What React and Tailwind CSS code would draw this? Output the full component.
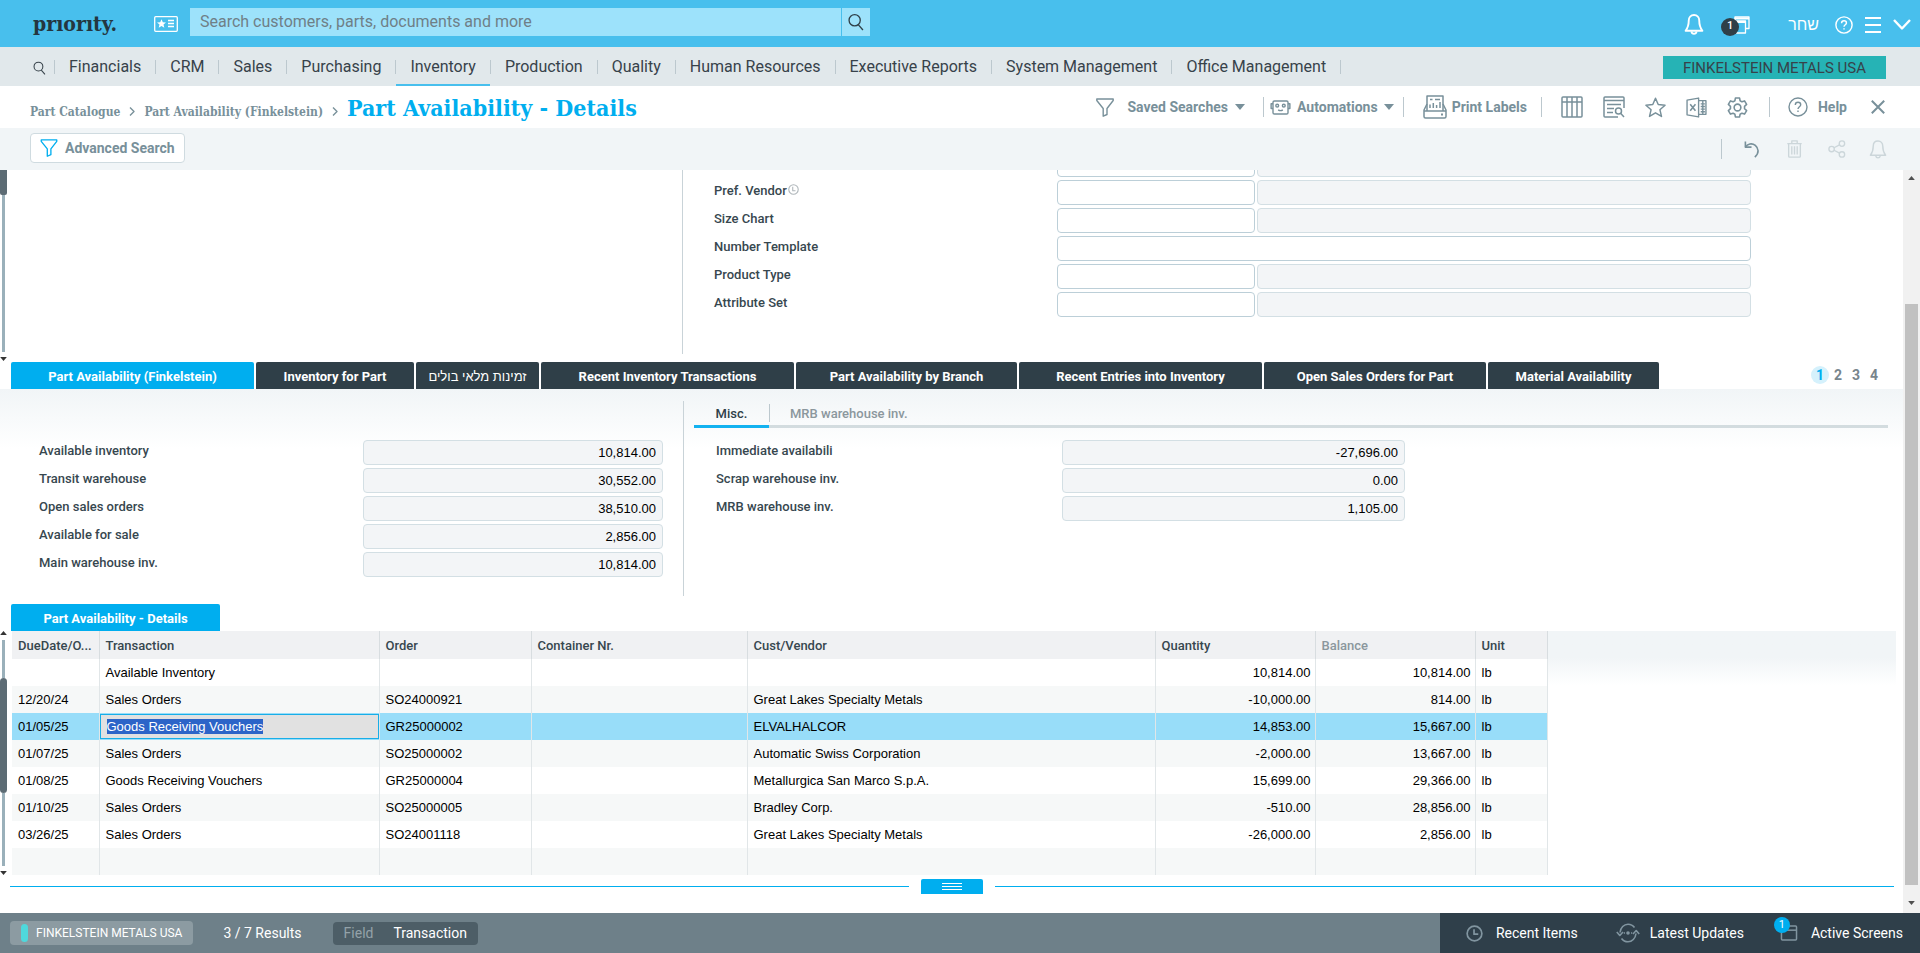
import React, { useEffect, useRef } from 'react';
import clsx from 'clsx';

const menuItems = [
  'Financials',
  'CRM',
  'Sales',
  'Purchasing',
  'Inventory',
  'Production',
  'Quality',
  'Human Resources',
  'Executive Reports',
  'System Management',
  'Office Management',
];

const subTabs = [
  { label: 'Part Availability (Finkelstein)', width: 'w-[243px]', active: true },
  { label: 'Inventory for Part', width: 'w-[158px]' },
  { label: 'זמינות מלאי בולים', width: 'w-[123px]', hebrew: true },
  { label: 'Recent Inventory Transactions', width: 'w-[253px]' },
  { label: 'Part Availability by Branch', width: 'w-[221px]' },
  { label: 'Recent Entries into Inventory', width: 'w-[243px]' },
  { label: 'Open Sales Orders for Part', width: 'w-[222px]' },
  { label: 'Material Availability', width: 'w-[171px]' },
];

const stockFields = [
  { id: 'available-inventory', label: 'Available inventory', value: '10,814.00' },
  { id: 'transit-warehouse', label: 'Transit warehouse', value: '30,552.00' },
  { id: 'open-sales-orders', label: 'Open sales orders', value: '38,510.00' },
  { id: 'available-for-sale', label: 'Available for sale', value: '2,856.00' },
  { id: 'main-warehouse', label: 'Main warehouse inv.', value: '10,814.00' },
];

const miscFields = [
  { id: 'immediate', label: 'Immediate availabili', value: '-27,696.00' },
  { id: 'scrap', label: 'Scrap warehouse inv.', value: '0.00' },
  { id: 'mrb', label: 'MRB warehouse inv.', value: '1,105.00' },
];

const columns = [
  { label: 'DueDate/O...', width: 'w-[87px]' },
  { label: 'Transaction', width: 'w-[280px]' },
  { label: 'Order', width: 'w-[152px]' },
  { label: 'Container Nr.', width: 'w-[216px]' },
  { label: 'Cust/Vendor', width: 'w-[408px]' },
  { label: 'Quantity', width: 'w-[160px]' },
  { label: 'Balance', width: 'w-[160px]', muted: true },
  { label: 'Unit', width: 'w-[72px]' },
];

const rows = [
  ['', 'Available Inventory', '', '', '', '10,814.00', '10,814.00', 'lb'],
  ['12/20/24', 'Sales Orders', 'SO24000921', '', 'Great Lakes Specialty Metals', '-10,000.00', '814.00', 'lb'],
  ['01/05/25', 'Goods Receiving Vouchers', 'GR25000002', '', 'ELVALHALCOR', '14,853.00', '15,667.00', 'lb'],
  ['01/07/25', 'Sales Orders', 'SO25000002', '', 'Automatic Swiss Corporation', '-2,000.00', '13,667.00', 'lb'],
  ['01/08/25', 'Goods Receiving Vouchers', 'GR25000004', '', 'Metallurgica San Marco S.p.A.', '15,699.00', '29,366.00', 'lb'],
  ['01/10/25', 'Sales Orders', 'SO25000005', '', 'Bradley Corp.', '-510.00', '28,856.00', 'lb'],
  ['03/26/25', 'Sales Orders', 'SO24001118', '', 'Great Lakes Specialty Metals', '-26,000.00', '2,856.00', 'lb'],
  ['', '', '', '', '', '', '', ''],
];

const SELECTED_ROW = 2;

/* Icons */
const Svg = ({ className, box = '0 0 24 24', stroke = 1.5, children }) => (
  <svg
    viewBox={box}
    className={clsx('shrink-0', className)}
    fill="none"
    stroke="currentColor"
    strokeWidth={stroke}
    strokeLinejoin="round"
    aria-hidden="true"
  >
    {children}
  </svg>
);

const SearchIcon = ({ className }) => (
  <Svg className={className} box="0 0 18 20">
    <circle cx="7.5" cy="8" r="6.3" />
    <path d="M11.5 13l5.3 6" />
  </Svg>
);

const FunnelIcon = ({ className }) => (
  <Svg className={className} box="0 0 18 19" stroke={1.4}>
    <path d="M.8 1h16.4v1.5L11 10.5v6l-3.8 1.7v-7.7L.8 2.5z" />
  </Svg>
);

const CardIcon = ({ className }) => (
  <Svg className={className} box="0 0 24 16" stroke={1.3}>
    <rect x=".7" y=".7" width="22.6" height="14.6" rx="1" />
    <path d="M7.5 3.2l1.3 3 3.2.2-2.5 2.1.8 3.2-2.8-1.7-2.8 1.7.8-3.2L3 6.4l3.2-.2z" fill="currentColor" stroke="none" />
    <path d="M14 4.5h6M14 7.5h6M14 10.5h6" />
  </Svg>
);

const BellIcon = ({ className, stroke = 1.5 }) => (
  <Svg className={className} box="0 0 18 20" stroke={stroke}>
    <path d="M9 1c-3 0-5 2.2-5 5.3 0 4.7-1 7.2-3 9.7h16c-2-2.5-3-5-3-9.7C14 3.2 12 1 9 1z" />
    <path d="M6.5 16.5c.3 1.5 1.2 2.3 2.5 2.3s2.2-.8 2.5-2.3" />
  </Svg>
);

const WindowsIcon = ({ className }) => (
  <Svg className={className} box="0 0 20 18" stroke={1.3}>
    <path d="M5 4V1h14v11.5h-3" />
    <path d="M4.5 1.5H19v2H4.5z" fill="currentColor" stroke="none" />
    <path d="M1 5h14.500v12H1z" />
    <path d="M1 5h14.500v2H1z" fill="currentColor" stroke="none" />
  </Svg>
);

const QuestionIcon = ({ className, stroke = 1.4 }) => (
  <Svg className={className} box="0 0 20 20" stroke={stroke}>
    <circle cx="10" cy="10" r="9" />
    <path d="M7.3 8c0-1.700 1.100-2.700 2.700-2.700s2.700 1 2.700 2.400c0 2-2.700 2.100-2.700 4.300M10 13.600v1.500" />
  </Svg>
);

const RobotIcon = ({ className }) => (
  <Svg className={className} box="0 0 22 16">
    <rect x="3" y="1" width="16" height="14" rx="1.5" />
    <path d="M3 4H1v5h2M19 4h2v5h-2" />
    <circle cx="7.5" cy="6" r="1.5" />
    <circle cx="14.5" cy="6" r="1.5" />
    <path d="M8.5 10.5c1.5 1 3.5 1 5 0" />
  </Svg>
);

const PrinterIcon = ({ className }) => (
  <Svg className={className} box="0 0 24 24">
    <path d="M4 16V1h16v15" />
    <path d="M4 9l-3 6v6.500c0 1 .6 1.500 1.500 1.500h19c.9 0 1.500-.5 1.500-1.500V15l-3-6" />
    <path d="M1 16h22M7 13V9.500M10.300 13V8M13.600 13v-3M17 13V7M7 4.500h2.500M12 4.500h5" />
    <path d="M18 19.500h2" strokeWidth="2" />
  </Svg>
);

const ColumnsIcon = ({ className }) => (
  <Svg className={className} box="0 0 22 22">
    <rect x="1" y="1" width="20" height="20" rx="1" />
    <path d="M1 6h20M6 1v20M11 1v20M16 1v20" />
  </Svg>
);

const ListSearchIcon = ({ className }) => (
  <Svg className={className} box="0 0 22 22">
    <path d="M21 12V2c0-.6-.4-1-1-1H2c-.6 0-1 .4-1 1v18c0 .6.4 1 1 1h13" />
    <path d="M1 4.500h20M4 8.500h14M4 12.500h7M4 16.500h6" />
    <circle cx="15.5" cy="15" r="3" />
    <path d="M17.600 17.300L21 21" />
  </Svg>
);

const StarIcon = ({ className }) => (
  <Svg className={className} box="0 0 20 20" stroke={1.4}>
    <path d="M10 1.200l2.600 6 6.500.6-4.900 4.300 1.500 6.400-5.700-3.400-5.700 3.400 1.500-6.400L.9 7.800l6.500-.6z" />
  </Svg>
);

const ExcelIcon = ({ className }) => (
  <Svg className={className} box="0 0 20 20" stroke={1.3}>
    <path d="M12 1L1 3v14l11 2z" />
    <path d="M12 3.500h7v13h-7M14 6.500h4M14 9h4M14 11.500h4M14 14h4M16 4v12" />
    <path d="M4 7l5 6M9 7l-5 6" strokeWidth="1.5" />
  </Svg>
);

const GearIcon = ({ className }) => (
  <Svg className={className} box="0 0 20 20">
    <path d="M8 1h4l.5 2.600 1.700 1 2.500-.9 2 3.400-2 1.800v2.200l2 1.800-2 3.400-2.500-.9-1.700 1L12 19H8l-.5-2.600-1.700-1-2.500.9-2-3.400 2-1.800V8.900l-2-1.800 2-3.400 2.500.9 1.700-1z" />
    <circle cx="10" cy="10" r="3.2" />
  </Svg>
);

const CloseIcon = ({ className }) => (
  <Svg className={className} box="0 0 14 14" stroke={2}>
    <path d="M.8.8l12.400 12.400M13.200.8L.8 13.200" />
  </Svg>
);

const UndoIcon = ({ className }) => (
  <Svg className={className} box="0 0 16 18" stroke={1.7}>
    <path d="M1 .5v6h6.500" />
    <path d="M1 6.500c2-3.500 7-4.800 10.500-1.800s4.500 8-.5 12.300" />
  </Svg>
);

const TrashIcon = ({ className }) => (
  <Svg className={className} box="0 0 18 20">
    <path d="M1 4h16M6 4V1h6v3M2.500 4v14c0 .6.400 1 1 1h11c.6 0 1-.4 1-1V4M6 7v9M9 7v9M12 7v9" />
  </Svg>
);

const ShareIcon = ({ className }) => (
  <Svg className={className} box="0 0 20 20">
    <circle cx="4" cy="10" r="3" />
    <circle cx="15.5" cy="4" r="3" />
    <circle cx="15.5" cy="16" r="3" />
    <path d="M6.700 8.600l6.100-3.200M6.700 11.400l6.100 3.200" />
  </Svg>
);

const ClockIcon = ({ className }) => (
  <Svg className={className} box="0 0 18 18" stroke={1.8}>
    <circle cx="9" cy="9" r="7.8" />
    <path d="M8.500 4.500v5.200h4.500" />
  </Svg>
);

const UpdatesIcon = ({ className }) => (
  <Svg className={className} box="0 0 24 20" stroke={1.6}>
    <path d="M4 9.500C4.500 4.500 8 1.200 12 1.200c2.800 0 5 1.200 6.500 3.300M20 10.500c-.5 5-4 8.300-8 8.300-2.800 0-5-1.200-6.500-3.300" />
    <path d="M.8 9l3 3.500L7 9M17 11l3.200-3.500 3 3.500" />
    <circle cx="12" cy="10" r="1.8" fill="currentColor" stroke="none" />
    <path d="M7.800 10H9M15 10h1.200" />
  </Svg>
);

const ScreenIcon = ({ className }) => (
  <Svg className={className} box="0 0 18 17" stroke={1.6}>
    <rect x="1" y="1" width="16" height="15" rx="1" />
    <path d="M1 5.500h16" />
  </Svg>
);

const Caret = ({ className, up }) => (
  <svg viewBox="0 0 10 6" className={clsx('shrink-0', className)} fill="currentColor" aria-hidden="true">
    <path d={up ? 'M0 6h10L5 0z' : 'M0 0h10L5 6z'} />
  </svg>
);

const Crumb = () => (
  <Svg className="mx-[9px] h-[9px] w-[6px]" box="0 0 6 9" stroke={1.4}>
    <path d="M1 .5l4 4-4 4" />
  </Svg>
);

const Divider = ({ className }) => <span className={clsx('w-px bg-[#bcc8ce]', className)} />;

/* Form pieces */
const boxStyle = 'h-[25px] min-w-0 rounded-sm border px-[6px] font-[Liberation_Sans,Arial,sans-serif] text-[13px] text-black outline-none';

const VendorRow = ({ id, label, wide, badge }) => (
  <div className="mb-[3px] grid grid-cols-[341fr_198fr_494fr_150fr] gap-x-[2px] pl-[31px]">
    <label htmlFor={id} className="flex h-[22px] items-center text-[13px] font-medium text-[#37474f]">
      {label}
      {badge && (
        <svg viewBox="0 0 10 10" className="mb-1 ml-px h-[11px] w-[11px] text-[#b0b7bb]" fill="none" stroke="currentColor" aria-hidden="true">
          <circle cx="5" cy="5" r="4.3" />
          <path d="M4.300 2.500v3.700h2.500" />
        </svg>
      )}
    </label>
    {wide ? (
      <input id={id} type="text" className={clsx(boxStyle, 'col-span-2 border-[#bccfd8] bg-white')} />
    ) : (
      <>
        <input id={id} type="text" aria-label={label || 'Family'} className={clsx(boxStyle, 'border-[#bccfd8] bg-white')} />
        <input type="text" readOnly aria-label={`${label} description`} className={clsx(boxStyle, 'border-[#d3dfe4] bg-[#f3f5f7]')} />
      </>
    )}
  </div>
);

const NumberField = ({ id, label, value, grid }) => (
  <div className={clsx('mb-[3px] grid', grid)}>
    <label htmlFor={id} className="flex h-[22px] items-center text-[13px] font-medium text-[#37474f]">
      {label}
    </label>
    <input id={id} type="text" readOnly defaultValue={value} className={clsx(boxStyle, 'border-[#d3dfe4] bg-[#f3f5f7] text-right')} />
  </div>
);

const SideScroll = ({ children, className }) => (
  <div className={clsx('flex w-[7px] shrink-0 flex-col items-center text-[#333]', className)}>{children}</div>
);

const TopBar = () => (
  <header className="flex h-[47px] items-center bg-[#48bfed] pl-[33px] pr-[9px] text-white">
    <span className="w-[121px] font-[DejaVu_Serif_Condensed,DejaVu_Serif,serif] text-[21px] font-bold leading-6 text-[#243640]">
      prıorıty.
    </span>
    <button type="button" aria-label="Shortcuts">
      <CardIcon className="h-4 w-6" />
    </button>
    <div className="mb-[3px] ml-3 flex h-7">
      <input
        type="search"
        aria-label="Search"
        placeholder="Search customers, parts, documents and more"
        className="w-[651px] bg-[#9de2fb] px-[10px] pb-px text-base outline-none placeholder:text-[#6f7f87]"
      />
      <button type="button" aria-label="Run search" className="ml-px flex w-7 items-center justify-center bg-[#9de2fb] text-[#2f3f48]">
        <SearchIcon className="h-[18px] w-4" />
      </button>
    </div>
    <div className="ml-auto flex items-center pt-[2px]">
      <button type="button" aria-label="Notifications">
        <BellIcon className="h-[21px] w-5" stroke={1.8} />
      </button>
      <button type="button" aria-label="Open windows" className="relative ml-6">
        <WindowsIcon className="h-[18px] w-6" />
        <span className="absolute -left-[7px] top-0.5 flex h-[18px] w-[18px] items-center justify-center rounded-full bg-[#2f3f48] text-[11px] font-medium">
          1
        </span>
      </button>
      <span className="ml-9 font-[Liberation_Sans,Arial,sans-serif] text-base">שחר</span>
      <button type="button" aria-label="Help center" className="ml-4">
        <QuestionIcon className="h-[18px] w-[18px]" stroke={1.6} />
      </button>
      <button type="button" aria-label="Menu" className="ml-3">
        <Svg className="h-4 w-4" box="0 0 16 16" stroke={2}>
          <path d="M0 1h16M0 8h16M0 15h16" />
        </Svg>
      </button>
      <button type="button" aria-label="Collapse header" className="ml-3">
        <Svg className="h-[11px] w-[18px]" box="0 0 18 11" stroke={2.4}>
          <path d="M1 1l8 8.500L17 1" />
        </Svg>
      </button>
    </div>
  </header>
);

const MenuBar = () => (
  <nav className="flex h-[39px] items-center bg-[#e1e8eb] pl-[33px] pr-[34px] text-[#37424a]">
    <button type="button" aria-label="Search menu" className="mr-2 mt-[3px]">
      <SearchIcon className="h-[14px] w-[13px]" />
    </button>
    <Divider className="h-[14px]" />
    {menuItems.map((item) => (
      <React.Fragment key={item}>
        <a
          href="#"
          className={clsx(
            'flex h-[39px] items-center border-b-2 px-[14px] pt-[2px] text-base',
            item === 'Inventory' ? 'border-[#48bfed]' : 'border-transparent'
          )}
        >
          {item}
        </a>
        <Divider className="h-[14px]" />
      </React.Fragment>
    ))}
    <button type="button" className="ml-auto mt-[2px] h-[23px] bg-[#26b3b5] px-5 text-[15px] leading-[22px]">
      FINKELSTEIN METALS USA
    </button>
  </nav>
);

const TitleBar = () => (
  <div className="flex h-[42px] items-center pl-[30px] pr-[35px] text-sm font-bold text-[#78909a]">
    <nav className="flex items-baseline pt-[6px] font-[DejaVu_Serif_Condensed,DejaVu_Serif,serif] text-xs leading-8">
      <a href="#">Part Catalogue</a>
      <Crumb />
      <a href="#">Part Availability (Finkelstein)</a>
      <Crumb />
      <h1 className="text-[23px] text-[#00aeef]">Part Availability - Details</h1>
    </nav>
    <div className="ml-auto flex items-center">
      <button type="button" className="flex items-center">
        <FunnelIcon className="mr-[14px] h-[19px] w-[18px]" />
        Saved Searches
        <Caret className="ml-[7px] h-[6px] w-[10px]" />
      </button>
      <Divider className="ml-[18px] mr-[6px] h-5" />
      <button type="button" className="flex items-center">
        <RobotIcon className="mr-[6px] h-[15px] w-[21px]" />
        Automations
        <Caret className="ml-[6px] h-[6px] w-[10px]" />
      </button>
      <Divider className="ml-[9px] mr-[19px] h-5" />
      <button type="button" className="flex items-center">
        <PrinterIcon className="mr-[5px] h-6 w-6" />
        Print Labels
      </button>
      <Divider className="ml-[14px] mr-[19px] h-5" />
      <div className="flex items-center gap-5">
        <button type="button" aria-label="Table view"><ColumnsIcon className="h-[22px] w-[22px]" /></button>
        <button type="button" aria-label="Find in list"><ListSearchIcon className="h-[22px] w-[22px]" /></button>
        <button type="button" aria-label="Favorites"><StarIcon className="h-[21px] w-[21px]" /></button>
        <button type="button" aria-label="Export to Excel"><ExcelIcon className="h-[21px] w-[21px]" /></button>
        <button type="button" aria-label="Settings"><GearIcon className="h-[21px] w-[21px]" /></button>
      </div>
      <Divider className="ml-[21px] mr-[18px] h-5" />
      <button type="button" className="flex items-center">
        <QuestionIcon className="mr-[10px] h-5 w-5" />
        Help
      </button>
      <button type="button" aria-label="Close form" className="ml-6">
        <CloseIcon className="h-[14px] w-[14px]" />
      </button>
    </div>
  </div>
);

const ActionBar = () => (
  <div className="flex h-[42px] items-center bg-[#f1f5f7] pl-[30px] pr-[33px] text-[#ccd6da]">
    <button type="button" className="mb-[2px] flex h-[30px] items-center rounded-sm border border-[#cfdbe0] bg-white px-[9px] text-sm font-bold text-[#78909a]">
      <FunnelIcon className="mr-[7px] h-[18px] w-[18px] text-[#00aeef]" />
      Advanced Search
    </button>
    <div className="ml-auto flex items-center">
      <Divider className="mr-[22px] h-5" />
      <button type="button" aria-label="Undo" className="text-[#78909a]"><UndoIcon className="h-[17px] w-4" /></button>
      <button type="button" aria-label="Delete" className="ml-[26px]"><TrashIcon className="h-[18px] w-[17px]" /></button>
      <button type="button" aria-label="Share" className="ml-6"><ShareIcon className="h-[18px] w-5" /></button>
      <button type="button" aria-label="Alerts" className="ml-[22px]"><BellIcon className="h-[19px] w-[18px]" /></button>
    </div>
  </div>
);

const PartSection = () => (
  <section className="flex h-[192px] items-start overflow-hidden">
    <SideScroll className="h-full">
      <div className="h-[25px] w-full shrink-0 rounded-b-xs bg-[#5c6b74]" />
      <div className="w-[3px] flex-1 bg-[#9ab0ba]" />
      <Caret className="mb-px mt-[5px] h-1 w-[7px]" />
    </SideScroll>
    <div className="grid h-[184px] flex-1 grid-cols-[676fr_1220fr]">
      <div className="border-r border-[#c9d3d8]" />
      <form className="-mt-[18px]">
        <VendorRow id="family" label="" />
        <VendorRow id="pref-vendor" label="Pref. Vendor" badge />
        <VendorRow id="size-chart" label="Size Chart" />
        <VendorRow id="number-template" label="Number Template" wide />
        <VendorRow id="product-type" label="Product Type" />
        <VendorRow id="attribute-set" label="Attribute Set" />
      </form>
    </div>
  </section>
);

const SubTabs = () => (
  <div className="flex items-center pl-[11px]">
    <div className="flex gap-[2px]">
      {subTabs.map((tab) => (
        <button
          key={tab.label}
          type="button"
          className={clsx(
            'h-[27px] rounded-t-xs pt-[3px] text-[13px] text-white',
            tab.width,
            tab.active ? 'bg-[#00aeef]' : 'bg-[#2f3f48]',
            tab.hebrew ? 'font-[Liberation_Sans,Arial,sans-serif]' : 'font-bold'
          )}
        >
          {tab.label}
        </button>
      ))}
    </div>
    <div className="mb-[2px] ml-auto mr-[20px] flex text-sm font-bold text-[#78858c]">
      <button type="button" className="h-[18px] w-[18px] rounded-full bg-[#d5f1fc] leading-[18px] text-[#00aeef]">1</button>
      <button type="button" className="h-[18px] w-[18px] leading-[18px]">2</button>
      <button type="button" className="h-[18px] w-[18px] leading-[18px]">3</button>
      <button type="button" className="h-[18px] w-[18px] leading-[18px]">4</button>
    </div>
  </div>
);

const StockSection = () => (
  <section className="h-[215px] bg-linear-to-b from-[#f1f5f7] to-white to-[60px] pt-3">
    <div className="grid h-[195px] grid-cols-[684fr_1219fr]">
      <div className="border-r border-[#c9d3d8] pt-[39px]">
        {stockFields.map((field) => (
          <NumberField key={field.id} {...field} grid="grid-cols-[324fr_300fr_20fr] pl-[39px]" />
        ))}
      </div>
      <div className="pl-[10px]">
        <div className="mr-[15px] flex h-[27px] border-b-[3px] border-[#d3dcdf] text-[13px] font-medium text-[#8b979d]">
          <button type="button" className="-mb-[3px] w-[75px] border-b-[3px] border-[#13b2f0] pt-[2px] text-[#2f3f48]">
            Misc.
          </button>
          <Divider className="mt-[3px] h-[18px]" />
          <button type="button" className="px-5 pt-[2px]">MRB warehouse inv.</button>
        </div>
        <div className="pt-3">
          {miscFields.map((field) => (
            <NumberField key={field.id} {...field} grid="grid-cols-[346fr_343fr_498fr] pl-[22px]" />
          ))}
        </div>
      </div>
    </div>
  </section>
);

const CellEditor = ({ value }) => {
  const ref = useRef(null);

  useEffect(() => {
    ref.current.focus({ preventScroll: true });
    ref.current.select();
  }, []);

  return (
    <input
      ref={ref}
      type="text"
      aria-label="Transaction"
      defaultValue={value}
      className="block h-[25px] w-full border border-[#18aee8] bg-[#e1e1e1] px-[6px] outline-none selection:bg-[#2c64c8] selection:text-white"
    />
  );
};

const DetailsTable = () => (
  <section className="flex">
    <SideScroll>
      <Caret up className="h-1 w-[7px]" />
      <div className="mt-[5px] h-[38px] w-[3px] bg-[#9ab0ba]" />
      <div className="h-[115px] w-full rounded-sm bg-[#5c6b74]" />
      <div className="w-[3px] flex-1 bg-[#9ab0ba]" />
      <Caret className="mt-[5px] h-1 w-[7px]" />
    </SideScroll>
    <div className="ml-[5px] mr-[7px] flex flex-1">
      <table className="w-[1535px] table-fixed border-collapse font-[Liberation_Sans,Arial,sans-serif] text-[13px] text-black">
        <thead>
          <tr className="h-7 bg-[#f0f1f3] font-[Roboto,sans-serif]">
            {columns.map((col) => (
              <th
                key={col.label}
                className={clsx(
                  'border-r border-[#d8dde0] px-[6px] pt-[2px] text-left font-medium',
                  col.width,
                  col.muted ? 'text-[#8b979d]' : 'text-[#37474f]'
                )}
              >
                {col.label}
              </th>
            ))}
          </tr>
        </thead>
        <tbody>
          {rows.map((row, i) => (
            <tr key={i} className={clsx('h-[27px]', i === SELECTED_ROW ? 'bg-[#98ddf9]' : i % 2 ? 'bg-[#f6f8f8]' : 'bg-white')}>
              {row.map((cell, j) => {
                const editing = i === SELECTED_ROW && j === 1;
                return (
                  <td
                    key={j}
                    className={clsx(
                      'border-r border-[#e1e6e8] py-0',
                      editing ? 'px-0' : 'pl-[6px] pr-1',
                      (j === 5 || j === 6) && 'text-right'
                    )}
                  >
                    {editing ? <CellEditor value={cell} /> : cell}
                  </td>
                );
              })}
            </tr>
          ))}
        </tbody>
      </table>
      <div className="h-[54px] flex-1 bg-linear-to-b from-[#f1f5f7] from-50% to-white" />
    </div>
  </section>
);

const PageScrollbar = () => (
  <div className="flex w-[17px] shrink-0 flex-col items-center bg-[#f1f1f1] py-[6px] text-[#505050]">
    <Caret up className="h-1 w-[7px]" />
    <div className="mt-[124px] w-[13px] flex-1 bg-[#c1c1c1]" />
    <Caret className="mb-[2px] mt-4 h-1 w-[7px]" />
  </div>
);

const StatusBar = () => (
  <footer className="flex h-10 items-center bg-[#6e8089] pl-[10px] text-sm text-white">
    <div className="flex h-6 items-center rounded-sm bg-[#8c9ba2] px-[11px] text-xs">
      <span className="mr-2 h-[18px] w-[7px] rounded-full bg-[#4fd8dc]" />
      FINKELSTEIN METALS USA
    </div>
    <span className="ml-[30px]">3 / 7 Results</span>
    <div className="ml-[31px] flex h-[23px] items-center gap-5 rounded-sm bg-[#4d5e67] px-[11px]">
      <span className="text-[#94a2a9]">Field</span>
      <span>Transaction</span>
    </div>
    <div className="ml-auto flex h-full items-center bg-[#2f3f4a] pl-[26px] pr-[17px]">
      <button type="button" className="flex items-center">
        <ClockIcon className="mr-[13px] h-[17px] w-[17px] text-[#8195a0]" />
        Recent Items
      </button>
      <button type="button" className="ml-[38px] flex items-center">
        <UpdatesIcon className="mr-[10px] h-5 w-6 text-[#8195a0]" />
        Latest Updates
      </button>
      <button type="button" className="relative ml-9 flex items-center">
        <ScreenIcon className="mr-[13px] h-4 w-[18px] text-[#8195a0]" />
        Active Screens
        <span className="absolute -left-[6px] -top-[6px] flex h-4 w-4 items-center justify-center rounded-full bg-[#00aeef] text-[11px]">
          1
        </span>
      </button>
    </div>
  </footer>
);

const App = () => {
  return (
    <div className="flex h-screen flex-col bg-white font-[Roboto,sans-serif]">
      <TopBar />
      <MenuBar />
      <TitleBar />
      <ActionBar />
      <div className="flex min-h-0 flex-1">
        <main className="min-w-0 flex-1 overflow-hidden">
          <PartSection />
          <SubTabs />
          <StockSection />
          <button type="button" className="ml-[11px] block h-[27px] w-[209px] rounded-t-xs bg-[#00aeef] pt-[3px] text-[13px] font-bold text-white">
            Part Availability - Details
          </button>
          <DetailsTable />
          {/* Splitter */}
          <div className="ml-[10px] mr-[9px] flex items-center gap-3 pt-1">
            <div className="h-px flex-1 bg-[#00aeef]" />
            <button type="button" aria-label="Resize panel" className="flex h-[15px] w-[62px] items-center justify-center rounded-t-xs bg-[#00aeef] text-white">
              <Svg className="h-2 w-5" box="0 0 20 8" stroke={1}>
                <path d="M0 .5h20M0 3.500h20M0 6.500h20" />
              </Svg>
            </button>
            <div className="h-px flex-1 bg-[#00aeef]" />
          </div>
        </main>
        <PageScrollbar />
      </div>
      <StatusBar />
    </div>
  );
};

export default App;
